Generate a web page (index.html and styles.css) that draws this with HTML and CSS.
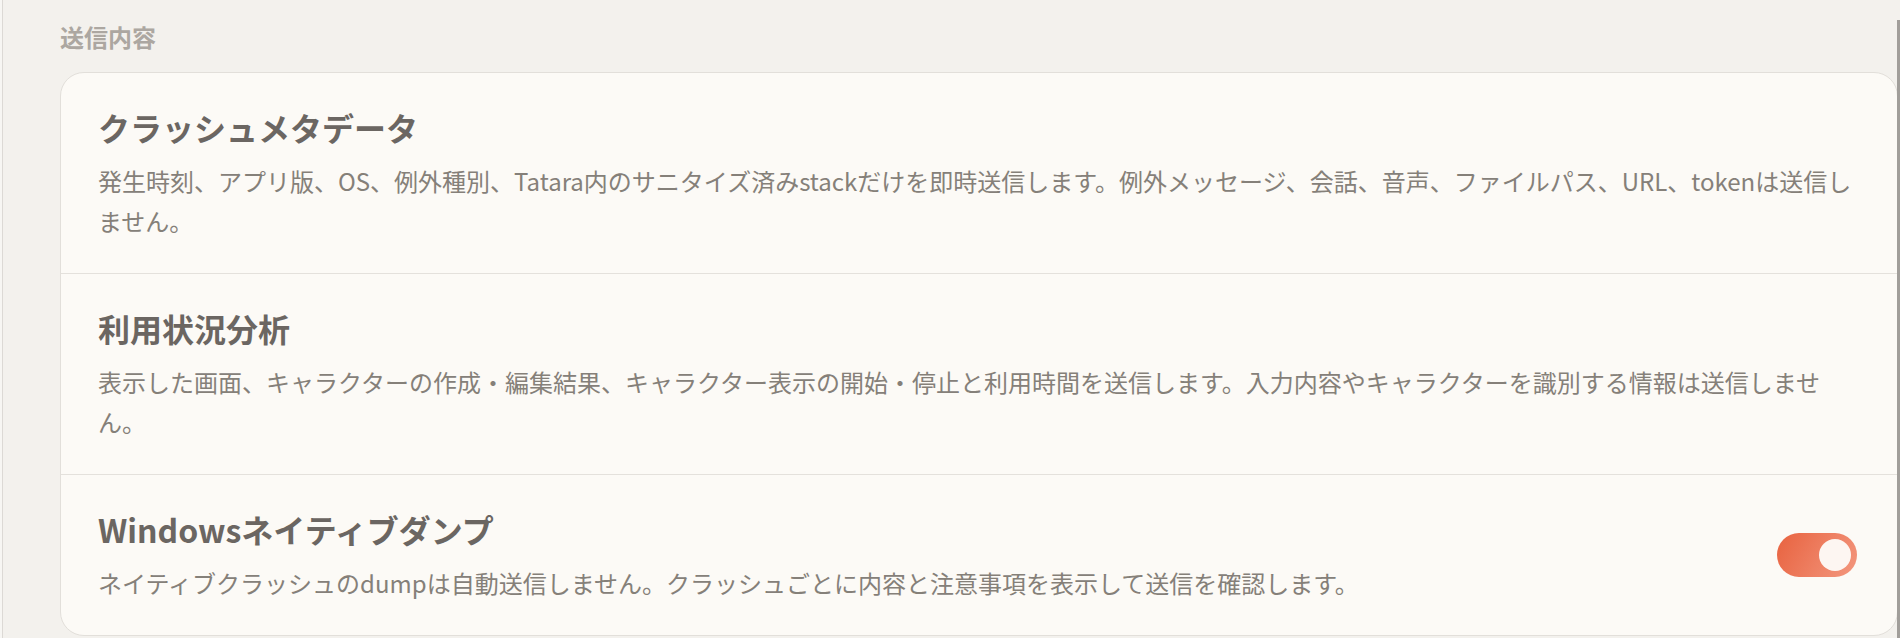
FILE: index.html
```html
<!DOCTYPE html>
<html lang="ja">
<head>
<meta charset="utf-8">
<title>送信内容</title>
<link rel="stylesheet" href="styles.css">
</head>
<body>
<main class="page">
  <h2 class="section-label">送信内容</h2>
  <section class="card">
    <div class="row">
      <div class="row-text">
        <h3 class="row-title">クラッシュメタデータ</h3>
        <p class="row-desc">発生時刻、アプリ版、OS、例外種別、Tatara内のサニタイズ済みstackだけを即時送信します。例外メッセージ、会話、音声、ファイルパス、URL、tokenは送信しません。</p>
      </div>
    </div>
    <div class="row">
      <div class="row-text">
        <h3 class="row-title">利用状況分析</h3>
        <p class="row-desc">表示した画面、キャラクターの作成・編集結果、キャラクター表示の開始・停止と利用時間を送信します。入力内容やキャラクターを識別する情報は送信しません。</p>
      </div>
    </div>
    <div class="row">
      <div class="row-text">
        <h3 class="row-title">Windowsネイティブダンプ</h3>
        <p class="row-desc">ネイティブクラッシュのdumpは自動送信しません。クラッシュごとに内容と注意事項を表示して送信を確認します。</p>
      </div>
      <button class="toggle is-on" type="button" aria-pressed="true"><span class="knob"></span></button>
    </div>
  </section>
</main>
<div class="scrollbar"></div>
</body>
</html>
```

FILE: styles.css
```css
html, body {
  margin: 0;
  padding: 0;
  height: 100%;
  overflow: hidden;
}

body {
  background: #f7f6f3;
  font-family: "Noto Sans CJK JP", "Noto Sans", sans-serif;
}

.page {
  box-sizing: border-box;
  height: 100%;
  margin-left: 2px;
  border-left: 1px solid #dcd9d5;
  background: #f3f1ed;
  padding: 20px 2px 0 57px;
}

.section-label {
  margin: 0 0 18px;
  font-size: 24px;
  line-height: 34px;
  font-weight: 700;
  color: #aca7a1;
}

.card {
  background: #fcfaf6;
  border: 1px solid #e2dfda;
  border-radius: 24px;
  overflow: hidden;
}

.row {
  display: flex;
  align-items: center;
  gap: 32px;
  padding: 32px 40px 32px 37px;
}

.row + .row {
  border-top: 1px solid #e4e1dc;
}

.row-text {
  flex: 1;
  min-width: 0;
}

.row-title {
  margin: 0 0 12px;
  font-size: 32px;
  line-height: 44px;
  font-weight: 700;
  color: #6b6662;
}

.row-desc {
  margin: 0;
  font-size: 24px;
  line-height: 40px;
  font-weight: 400;
  color: #858079;
}

.toggle {
  flex: none;
  display: flex;
  align-items: center;
  justify-content: flex-end;
  box-sizing: border-box;
  width: 80px;
  height: 44px;
  padding: 6px;
  border: none;
  border-radius: 22px;
  background: linear-gradient(120deg, #e8623f 0%, #ee8063 55%, #f3977e 100%);
  cursor: pointer;
}

.knob {
  width: 32px;
  height: 32px;
  border-radius: 50%;
  background: #fdf6f2;
}

.scrollbar {
  position: fixed;
  top: 20px;
  right: 0;
  bottom: 0;
  width: 3px;
  background: #a19e9a;
}
```
